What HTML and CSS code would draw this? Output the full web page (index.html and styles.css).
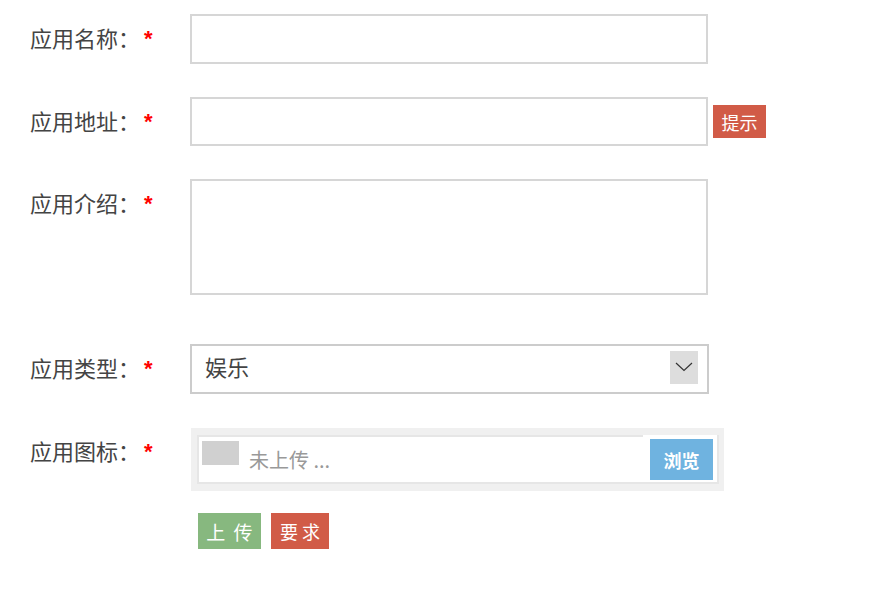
FILE: index.html
```html
<!DOCTYPE html>
<html lang="zh-CN">
<head>
    <meta charset="UTF-8">
    <meta name="viewport" content="width=device-width, initial-scale=1.0">
    <title>应用信息</title>
    <link rel="stylesheet" href="styles.css">
</head>
<body>
    <form class="app-form">
        <div class="form-row row-name">
            <label class="form-label" for="app-name">应用名称：<em class="req">*</em></label>
            <input id="app-name" class="text-input" type="text">
        </div>

        <div class="form-row row-url">
            <label class="form-label" for="app-url">应用地址：<em class="req">*</em></label>
            <input id="app-url" class="text-input url-input" type="text">
            <button type="button" class="btn btn-red btn-tip">提示</button>
        </div>

        <div class="form-row row-intro">
            <label class="form-label" for="app-intro">应用介绍：<em class="req">*</em></label>
            <textarea id="app-intro" class="text-area"></textarea>
        </div>

        <div class="form-row row-type">
            <label class="form-label">应用类型：<em class="req">*</em></label>
            <div class="select-box">
                <span class="select-value">娱乐</span>
                <span class="select-arrow">
                    <svg width="28" height="33" viewBox="0 0 28 33">
                        <polyline points="6,12 14,19.5 22,12" fill="none" stroke="#333" stroke-width="1.2"/>
                    </svg>
                </span>
            </div>
        </div>

        <div class="form-row row-icon">
            <label class="form-label">应用图标：<em class="req">*</em></label>
            <div class="upload-box">
                <div class="upload-inner">
                    <div class="upload-file">
                        <span class="upload-thumb"></span>
                        <span class="upload-name">未上传 ...</span>
                    </div>
                    <div class="upload-browse">
                        <button type="button" class="btn btn-blue">浏览</button>
                    </div>
                </div>
            </div>
        </div>

        <div class="form-actions">
            <button type="button" class="btn btn-green btn-upload">上 传</button>
            <button type="button" class="btn btn-red btn-rule">要 求</button>
        </div>
    </form>
</body>
</html>
```

FILE: styles.css
```css
body {
    margin: 0;
    background: #fff;
    font-family: "Noto Sans CJK SC", "Noto Sans", sans-serif;
    color: #444;
}
.app-form {
    padding: 14px 0 0 30px;
}
.form-row {
    display: flex;
    align-items: flex-start;
    margin-bottom: 33px;
}
.form-label {
    width: 160px;
    height: 50px;
    font-size: 22px;
    line-height: 46px;
    color: #444;
    white-space: nowrap;
}
.req {
    font-style: normal;
    font-family: "Liberation Sans", Arial, sans-serif;
    font-weight: bold;
    font-size: 22px;
    line-height: 1;
    color: #f00;
    margin-left: 4px;
    vertical-align: 1px;
}
.text-input {
    box-sizing: border-box;
    width: 518px;
    height: 50px;
    border: 2px solid #d6d6d6;
    outline: none;
    padding: 0 10px;
    font-size: 20px;
}
.row-url {
    margin-bottom: 32px;
}
.url-input {
    height: 49px;
}
.row-intro {
    margin-bottom: 49px;
}
.text-area {
    box-sizing: border-box;
    width: 518px;
    height: 116px;
    border: 2px solid #d6d6d6;
    outline: none;
    resize: none;
    margin: 0;
}
.btn {
    border: none;
    color: #fff;
    font-family: "Noto Sans CJK SC", sans-serif;
    padding: 0;
    cursor: pointer;
}
.btn-red {
    background: #d15b47;
}
.btn-green {
    background: #87b87f;
}
.btn-blue {
    background: #6fb3e0;
    width: 63px;
    height: 41px;
    font-size: 18px;
    font-weight: bold;
}
.btn-tip {
    width: 53px;
    height: 33px;
    margin: 8px 0 0 5px;
    font-size: 18px;
}
.row-type {
    margin-bottom: 34px;
}
.select-box {
    box-sizing: border-box;
    width: 519px;
    height: 50px;
    border: 2px solid #ccc;
    display: flex;
    justify-content: space-between;
    align-items: flex-start;
    padding: 5px 9px 0 13px;
}
.select-value {
    font-size: 22px;
    line-height: 30px;
    color: #444;
}
.select-arrow {
    display: block;
    width: 28px;
    height: 33px;
    background: #ddd;
}
.select-arrow svg {
    display: block;
}
.row-icon {
    margin-bottom: 22px;
}
.row-icon .form-label {
    line-height: 44px;
}
.upload-box {
    width: 533px;
    height: 63px;
    box-sizing: border-box;
    margin-left: 1px;
    background: #f0f0f0;
    padding: 7px 5px 7px 6px;
}
.upload-inner {
    display: flex;
    height: 49px;
}
.upload-file {
    flex: 1;
    box-sizing: border-box;
    display: flex;
    align-items: flex-start;
    background: #fff;
    border: 2px solid #e6e6e6;
    border-right: none;
}
.upload-thumb {
    width: 37px;
    height: 24px;
    margin: 4px 0 0 3px;
    background: #d0d0d0;
}
.upload-name {
    margin-left: 10px;
    font-size: 20px;
    line-height: 45px;
    color: #999;
}
.upload-browse {
    box-sizing: border-box;
    width: 76px;
    background: #fff;
    padding: 4px 4px 0 7px;
    border-right: 2px solid #e6e6e6;
    border-bottom: 2px solid #e6e6e6;
}
.upload-browse .btn {
    display: block;
}
.form-actions {
    display: flex;
    gap: 10px;
    padding-left: 168px;
}
.btn-upload {
    width: 63px;
    height: 36px;
    font-size: 19px;
    letter-spacing: 2px;
    text-indent: 2px;
}
.btn-rule {
    width: 58px;
    height: 36px;
    font-size: 18px;
}
```
